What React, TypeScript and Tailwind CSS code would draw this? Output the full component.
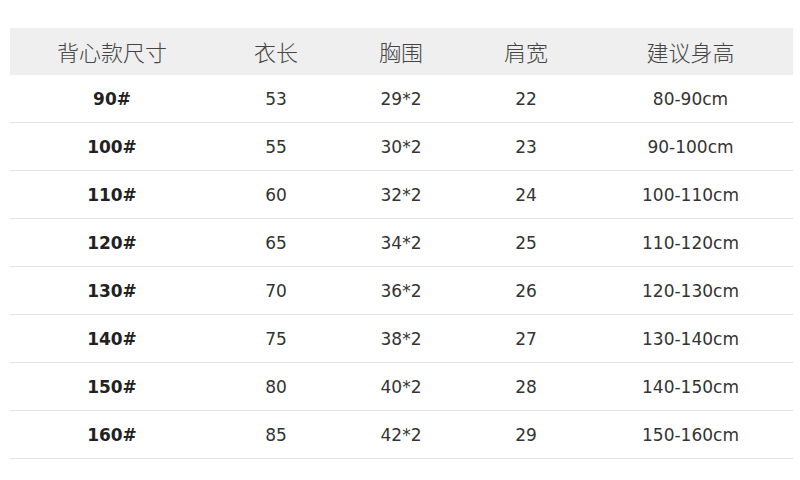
const headers = ['背心款尺寸', '衣长', '胸围', '肩宽', '建议身高']

const rows = [
  ['90#', '53', '29*2', '22', '80-90cm'],
  ['100#', '55', '30*2', '23', '90-100cm'],
  ['110#', '60', '32*2', '24', '100-110cm'],
  ['120#', '65', '34*2', '25', '110-120cm'],
  ['130#', '70', '36*2', '26', '120-130cm'],
  ['140#', '75', '38*2', '27', '130-140cm'],
  ['150#', '80', '40*2', '28', '140-150cm'],
  ['160#', '85', '42*2', '29', '150-160cm'],
]

const cols = 'grid grid-cols-[204px_124px_126px_124px_205px]'

const App = () => {
  return (
    <div className="h-[480px] w-[800px] bg-white pt-[28px] pl-[10px]">
      <div className="w-[783px]">
        <div
          className={`${cols} h-[47px] items-center bg-[#efefef] text-[22px] font-light text-[#444]`}
          style={{ fontFamily: '"Noto Sans CJK SC", sans-serif' }}
        >
          {headers.map((h) => (
            <div key={h} className="text-center">
              {h}
            </div>
          ))}
        </div>
        {rows.map((r) => (
          <div
            key={r[0]}
            className={`${cols} h-[48px] items-center border-b border-[#e2e2e8] pt-[2px] text-[17px] text-[#333]`}
            style={{ fontFamily: '"DejaVu Sans", Verdana, sans-serif' }}
          >
            {r.map((c, i) => (
              <div key={i} className={i === 0 ? 'text-center font-bold text-[#222]' : 'text-center'}>
                {c}
              </div>
            ))}
          </div>
        ))}
      </div>
    </div>
  )
}

export default App
